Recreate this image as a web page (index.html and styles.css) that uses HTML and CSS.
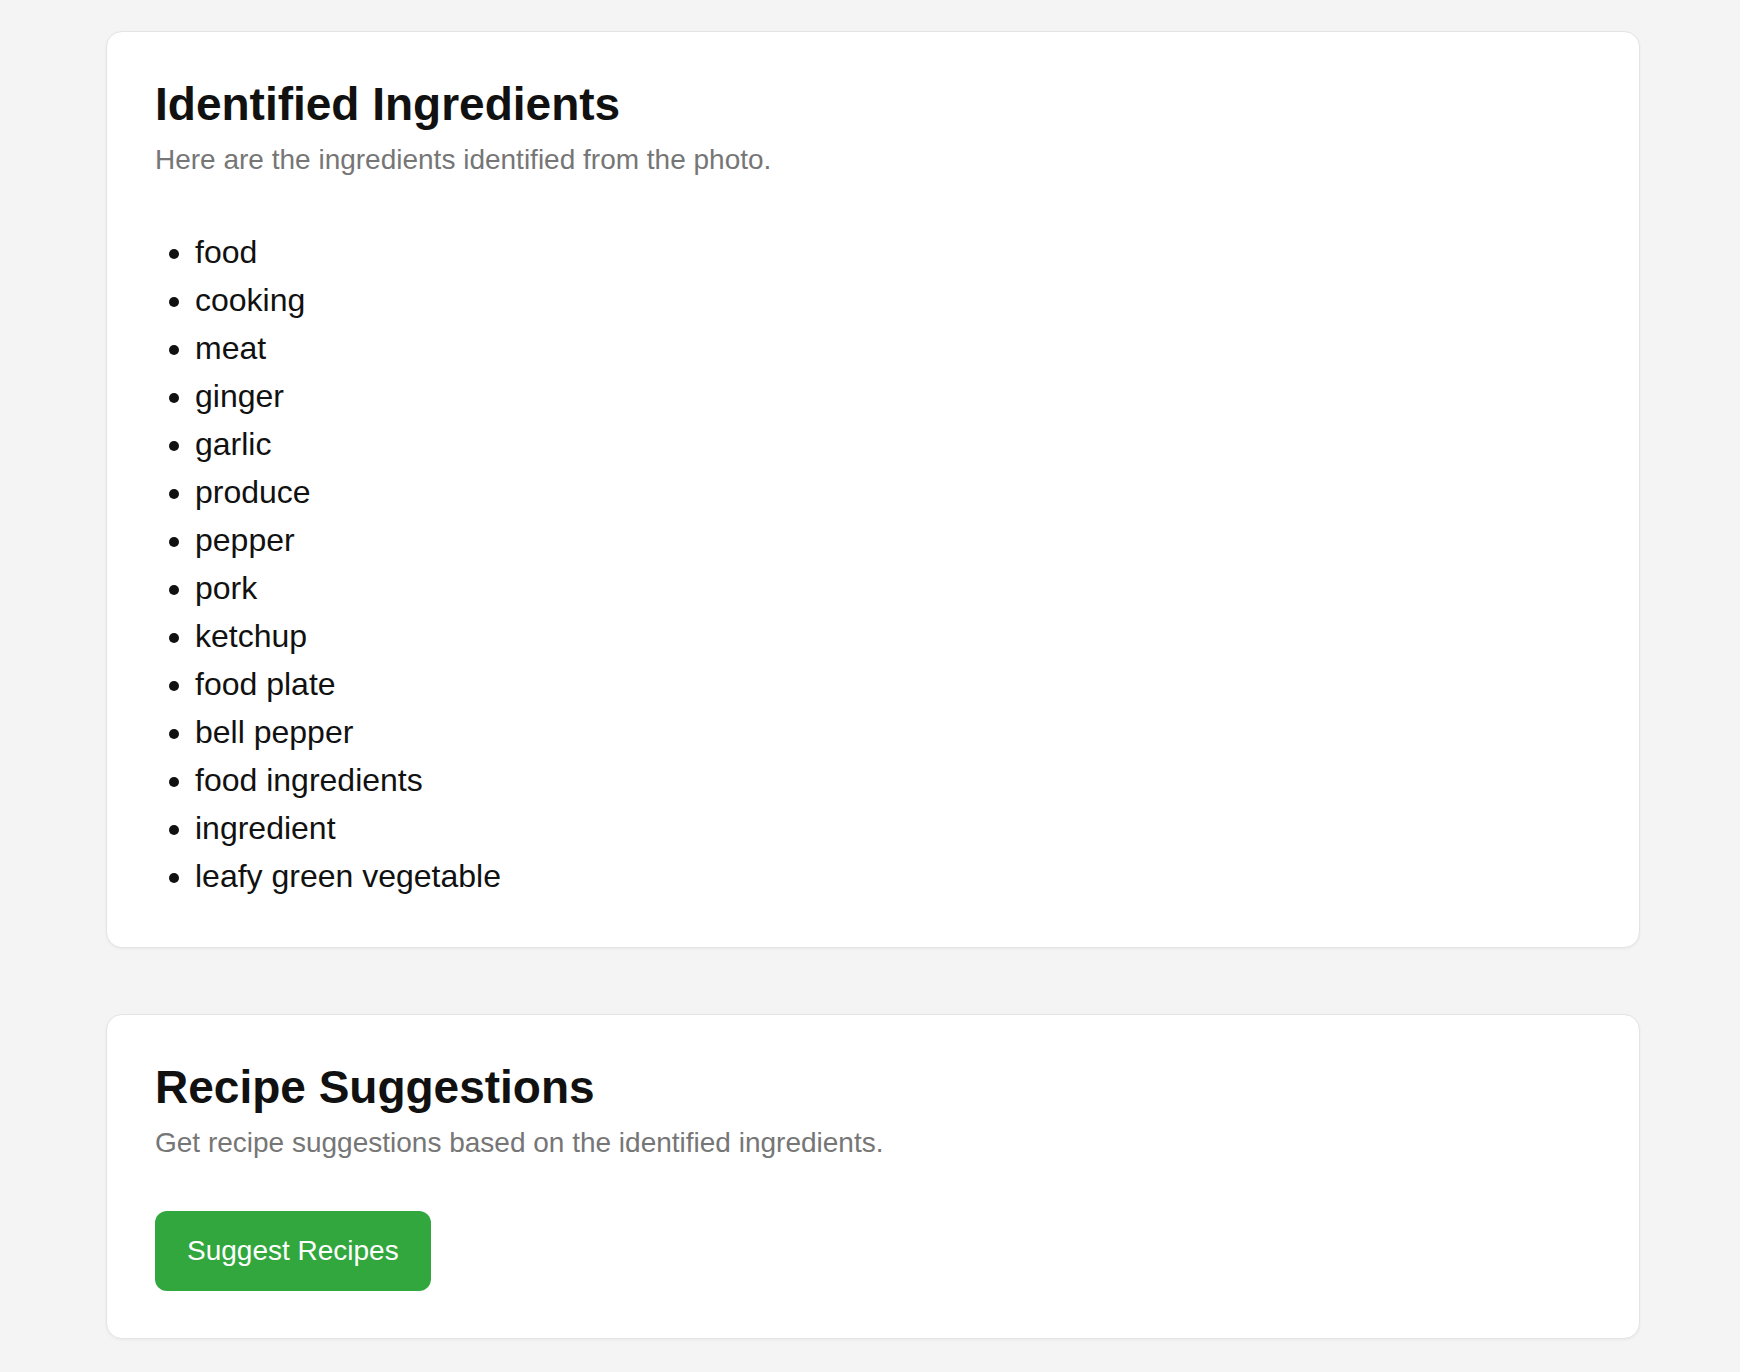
FILE: index.html
```html
<!DOCTYPE html>
<html lang="en">
<head>
<meta charset="utf-8">
<title>Ingredients</title>
<link rel="stylesheet" href="styles.css">
</head>
<body>
<main class="page">
  <section class="card">
    <h2 class="card-title">Identified Ingredients</h2>
    <p class="card-subtitle">Here are the ingredients identified from the photo.</p>
    <ul class="ingredient-list">
      <li>food</li>
      <li>cooking</li>
      <li>meat</li>
      <li>ginger</li>
      <li>garlic</li>
      <li>produce</li>
      <li>pepper</li>
      <li>pork</li>
      <li>ketchup</li>
      <li>food plate</li>
      <li>bell pepper</li>
      <li>food ingredients</li>
      <li>ingredient</li>
      <li>leafy green vegetable</li>
    </ul>
  </section>
  <section class="card">
    <h2 class="card-title">Recipe Suggestions</h2>
    <p class="card-subtitle">Get recipe suggestions based on the identified ingredients.</p>
    <button class="btn-primary" type="button">Suggest Recipes</button>
  </section>
</main>
</body>
</html>
```

FILE: styles.css
```css
html, body {
  margin: 0;
  padding: 0;
  background: #f4f4f4;
  font-family: "Liberation Sans", Arial, Helvetica, sans-serif;
  color: #111;
}

.page {
  display: flex;
  flex-direction: column;
  gap: 66px;
  padding: 31px 100px 32px 106px;
}

.card {
  background: #ffffff;
  border: 1px solid #e4e4e4;
  border-radius: 16px;
  padding: 48px 48px 47px;
  box-shadow: 0 1px 3px rgba(0, 0, 0, 0.05);
}

.card-title {
  margin: 0;
  font-size: 46px;
  line-height: 48px;
  font-weight: 700;
  color: #111;
}

.card-subtitle {
  margin: 16px 0 0;
  font-size: 28px;
  line-height: 32px;
  color: #767676;
}

.ingredient-list {
  margin: 52px 0 0;
  padding-left: 40px;
  font-size: 32px;
  line-height: 48px;
  color: #111;
}

.btn-primary {
  display: inline-block;
  margin-top: 52px;
  padding: 24px 32px;
  border: none;
  border-radius: 12px;
  background: #31a73d;
  color: #ffffff;
  font-family: "Liberation Sans", Arial, Helvetica, sans-serif;
  font-size: 28px;
  line-height: 32px;
  cursor: pointer;
}
```
